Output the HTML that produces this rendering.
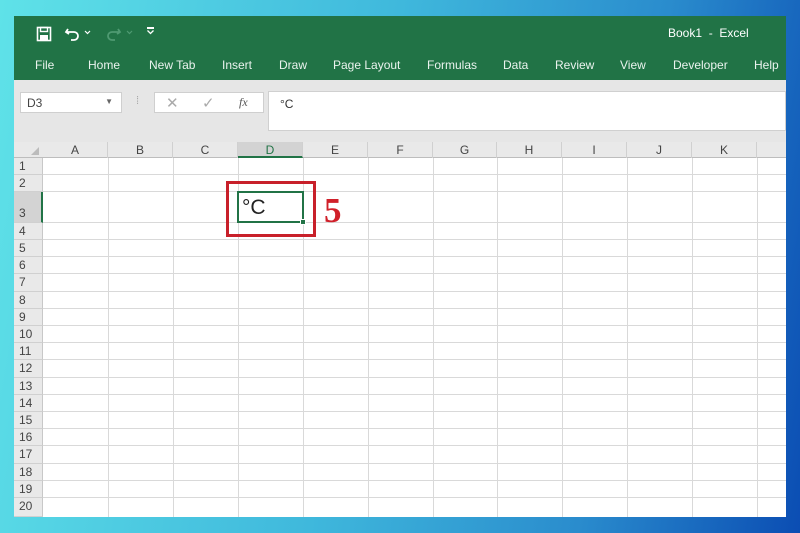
<!DOCTYPE html>
<html><head><meta charset="utf-8"><style>
*{margin:0;padding:0;box-sizing:border-box}
body{width:800px;height:533px;overflow:hidden;position:relative;background:linear-gradient(100deg,#5fe2e8 0%,#3fb8dc 45%,#2a8ccd 75%,#0b4db3 100%);font-family:"Liberation Sans",sans-serif}
.win{position:absolute;left:14px;top:16px;width:772px;height:501px;background:#fff;overflow:hidden}
.green{position:absolute;left:0;top:0;width:772px;height:64px;background:#217346;color:#fff}
.tab{position:absolute;top:42px;font-size:12px;color:#eaf3ee}
.gray{position:absolute;left:0;top:64px;width:772px;height:62px;background:#e6e6e6}
.abs{position:absolute}
.ch{position:absolute;top:126px;height:16px;font-size:12px;color:#444;text-align:center;line-height:16px;border-right:1px solid #d0d0d0}
.rh{position:absolute;left:0;width:29px;font-size:12px;color:#444;padding-left:5px;background:#e9e9e9;border-bottom:1px solid #d0d0d0;border-right:1px solid #c8c8c8}
.hl{position:absolute;left:29px;width:743px;height:1px;background:#d9d9d9}
.vl{position:absolute;top:142px;width:1px;height:359px;background:#d9d9d9}
</style></head><body>
<div class="win">
<div class="green">
 <svg class="abs" style="left:22px;top:10px" width="16" height="16" viewBox="0 0 16 16"><rect x="1.5" y="1.5" width="13" height="13" fill="none" stroke="#fff" stroke-width="1.6"/><rect x="4.5" y="1.5" width="7" height="4" fill="none" stroke="#fff" stroke-width="1.4"/><rect x="4" y="9" width="8" height="5" fill="#fff"/></svg>
 <svg class="abs" style="left:50px;top:9px" width="30" height="16" viewBox="0 0 30 16"><path d="M4 4 L2 7 L5 9 M2.5 7 H10 a4 4 0 0 1 0 8 H7" fill="none" stroke="#fff" stroke-width="1.8"/><path d="M21 6 l2.5 2.5 l2.5 -2.5" fill="none" stroke="#fff" stroke-width="1.2"/></svg>
 <svg class="abs" style="left:92px;top:9px" width="30" height="16" viewBox="0 0 30 16"><path d="M12 4 L14 7 L11 9 M13.5 7 H6 a4 4 0 0 0 0 8 H9" fill="none" stroke="#4f9a72" stroke-width="1.8"/><path d="M21 6 l2.5 2.5 l2.5 -2.5" fill="none" stroke="#4f9a72" stroke-width="1.2"/></svg>
 <div class="abs" style="left:133px;top:11px;width:7px;height:1.5px;background:#fff"></div>
 <svg class="abs" style="left:133px;top:14px" width="8" height="5"><path d="M0.5 0.5 L3.5 3.5 L6.5 0.5" fill="none" stroke="#fff" stroke-width="1.3"/></svg>
 <div class="abs" style="left:654px;top:10px;font-size:12px">Book1 &nbsp;- &nbsp;Excel</div>
 <div class="tab" style="left:21px">File</div>
 <div class="tab" style="left:74px">Home</div>
 <div class="tab" style="left:135px">New Tab</div>
 <div class="tab" style="left:208px">Insert</div>
 <div class="tab" style="left:265px">Draw</div>
 <div class="tab" style="left:319px">Page Layout</div>
 <div class="tab" style="left:413px">Formulas</div>
 <div class="tab" style="left:489px">Data</div>
 <div class="tab" style="left:541px">Review</div>
 <div class="tab" style="left:606px">View</div>
 <div class="tab" style="left:659px">Developer</div>
 <div class="tab" style="left:740px">Help</div>
</div>
<div class="gray"></div>
<div class="abs" style="left:6px;top:76px;width:102px;height:21px;background:#fff;border:1px solid #cfcfcf;font-size:12px;color:#444;padding:3px 0 0 6px">D3<span style="position:absolute;right:8px;top:4px;font-size:8px;color:#666">▼</span></div>
<div class="abs" style="left:122px;top:79px;color:#aaa;font-size:11px">⁞</div>
<div class="abs" style="left:140px;top:76px;width:110px;height:21px;background:#fff;border:1px solid #cfcfcf"><span class="abs" style="left:11px;top:1px;color:#aaa;font-size:15px">✕</span><span class="abs" style="left:47px;top:1px;color:#aaa;font-size:15px">✓</span><span class="abs" style="left:84px;top:2px;color:#555;font-size:12px;font-style:italic;font-family:'Liberation Serif',serif">fx</span></div>
<div class="abs" style="left:254px;top:75px;width:518px;height:40px;background:#fff;border:1px solid #d0d0d0;font-size:12px;color:#333;padding:5px 0 0 11px">°C</div>
<div class="abs" style="left:0;top:126px;width:772px;height:16px;background:#e9e9e9;border-bottom:1px solid #bdbdbd"></div>
<svg class="abs" style="left:16px;top:130px" width="10" height="10"><path d="M9 1 V9 H1 Z" fill="#bcbcbc"/></svg>
<div class="ch" style="left:29px;width:65px">A</div>
<div class="ch" style="left:94px;width:65px">B</div>
<div class="ch" style="left:159px;width:65px">C</div>
<div class="ch" style="left:224px;width:65px;background:#d3d3d3;border-bottom:2px solid #217346;color:#217346">D</div>
<div class="ch" style="left:289px;width:65px">E</div>
<div class="ch" style="left:354px;width:65px">F</div>
<div class="ch" style="left:419px;width:64px">G</div>
<div class="ch" style="left:483px;width:65px">H</div>
<div class="ch" style="left:548px;width:65px">I</div>
<div class="ch" style="left:613px;width:65px">J</div>
<div class="ch" style="left:678px;width:65px">K</div>
<div class="vl" style="left:94px"></div><div class="vl" style="left:159px"></div><div class="vl" style="left:224px"></div><div class="vl" style="left:289px"></div><div class="vl" style="left:354px"></div><div class="vl" style="left:419px"></div><div class="vl" style="left:483px"></div><div class="vl" style="left:548px"></div><div class="vl" style="left:613px"></div><div class="vl" style="left:678px"></div><div class="vl" style="left:743px"></div>
<div class="rh" style="top:142px;height:17px;line-height:17px">1</div>
<div class="rh" style="top:159px;height:17px;line-height:17px">2</div>
<div class="rh" style="top:176px;height:31px;line-height:42px;background:#d3d3d3;border-right:2px solid #217346">3</div>
<div class="rh" style="top:207px;height:17px;line-height:17px">4</div>
<div class="rh" style="top:224px;height:17.2px;line-height:17px">5</div>
<div class="rh" style="top:241.2px;height:17.2px;line-height:17px">6</div>
<div class="rh" style="top:258.4px;height:17.2px;line-height:17px">7</div>
<div class="rh" style="top:275.6px;height:17.2px;line-height:17px">8</div>
<div class="rh" style="top:292.8px;height:17.2px;line-height:17px">9</div>
<div class="rh" style="top:310px;height:17.2px;line-height:17px">10</div>
<div class="rh" style="top:327.2px;height:17.2px;line-height:17px">11</div>
<div class="rh" style="top:344.4px;height:17.2px;line-height:17px">12</div>
<div class="rh" style="top:361.6px;height:17.2px;line-height:17px">13</div>
<div class="rh" style="top:378.8px;height:17.2px;line-height:17px">14</div>
<div class="rh" style="top:396px;height:17.2px;line-height:17px">15</div>
<div class="rh" style="top:413.2px;height:17.2px;line-height:17px">16</div>
<div class="rh" style="top:430.4px;height:17.2px;line-height:17px">17</div>
<div class="rh" style="top:447.6px;height:17.2px;line-height:17px">18</div>
<div class="rh" style="top:464.8px;height:17.2px;line-height:17px">19</div>
<div class="rh" style="top:482px;height:19px;line-height:17px">20</div>
<div class="hl" style="top:158px"></div><div class="hl" style="top:175px"></div><div class="hl" style="top:206px"></div><div class="hl" style="top:223px"></div><div class="hl" style="top:240.2px"></div><div class="hl" style="top:257.4px"></div><div class="hl" style="top:274.6px"></div><div class="hl" style="top:291.8px"></div><div class="hl" style="top:309px"></div><div class="hl" style="top:326.2px"></div><div class="hl" style="top:343.4px"></div><div class="hl" style="top:360.6px"></div><div class="hl" style="top:377.8px"></div><div class="hl" style="top:395px"></div><div class="hl" style="top:412.2px"></div><div class="hl" style="top:429.4px"></div><div class="hl" style="top:446.6px"></div><div class="hl" style="top:463.8px"></div><div class="hl" style="top:481px"></div>
<div class="abs" style="left:223px;top:175px;width:67px;height:32px;border:2px solid #217346;font-size:21px;color:#222;padding:2px 0 0 3px;line-height:26px">°C</div>
<div class="abs" style="left:286px;top:203px;width:6px;height:6px;background:#217346;border:1px solid #fff"></div>
<div class="abs" style="left:212px;top:165px;width:90px;height:56px;border:3px solid #c8202a"></div>
<div class="abs" style="left:310px;top:175px;font-family:'Liberation Serif',serif;font-weight:bold;font-size:35px;color:#d0202a;line-height:40px">5</div>
</div>
</body></html>
